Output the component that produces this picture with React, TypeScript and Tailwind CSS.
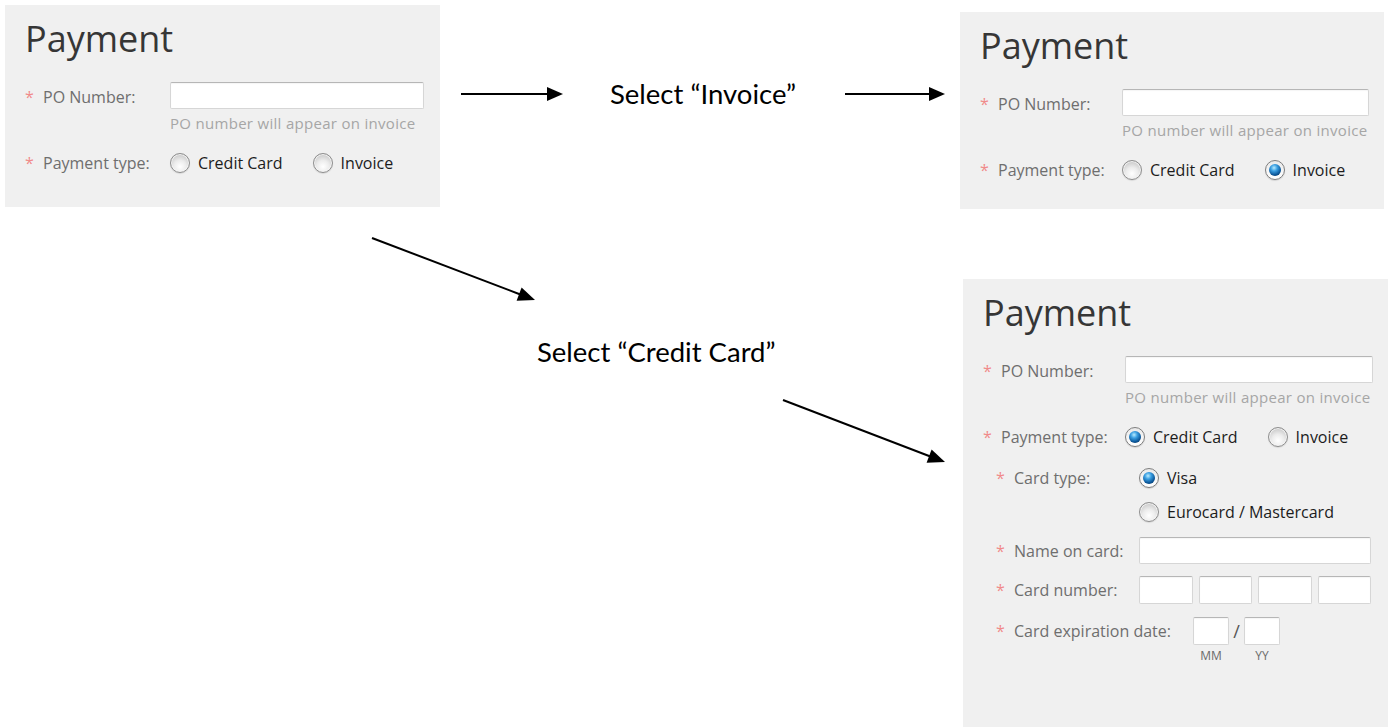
import type { ReactNode } from 'react'

function Star() {
  return <span className="w-[18px] shrink-0 text-[#f08a8a]">*</span>
}

function Label({ children, className = '' }: { children: ReactNode; className?: string }) {
  return (
    <div className={`flex text-[16px] text-[#6e6e6e] ${className}`}>
      <Star />
      <span>{children}</span>
    </div>
  )
}

function Box({ className = '' }: { className?: string }) {
  return (
    <div
      className={`rounded-[2px] border border-[#d6d6d6] border-t-[#b6b6b6] bg-white shadow-[inset_0_1px_1px_rgba(0,0,0,0.04)] ${className}`}
    />
  )
}

function Radio({ checked = false }: { checked?: boolean }) {
  if (checked) {
    return (
      <span className="flex h-[20px] w-[20px] shrink-0 items-center justify-center rounded-full border border-[#7e7e7e] bg-[linear-gradient(#e9e9e9,#ffffff)] shadow-[0_1px_1px_rgba(0,0,0,0.12)]">
        <span className="h-[12px] w-[12px] rounded-full bg-[radial-gradient(circle_at_42%_32%,#b8ecff_0%,#3a9fe2_30%,#0c5799_65%,#04264a_100%)]" />
      </span>
    )
  }
  return (
    <span className="h-[20px] w-[20px] shrink-0 rounded-full border border-[#8e8e8e] bg-[radial-gradient(circle_at_50%_70%,#ffffff_0%,#ececec_40%,#c4c4c4_85%,#d6d6d6_100%)] shadow-[inset_0_0_0_1px_#f4f4f4,0_1px_1px_rgba(0,0,0,0.1)]" />
  )
}

function Option({ checked, children }: { checked?: boolean; children: ReactNode }) {
  return (
    <div className="flex h-[20px] items-center">
      <Radio checked={checked} />
      <span className="ml-[8px] text-[16px] leading-[20px] text-[#1c1c1c]">{children}</span>
    </div>
  )
}

function TopFields({ cols, payment }: { cols: string; payment: 'none' | 'invoice' | 'card' }) {
  return (
    <>
      <h2 className="text-[36px] leading-[36px] text-[#363636]">Payment</h2>
      <div className={`mt-[25px] grid items-start ${cols}`}>
        <Label className="leading-[31px]">PO Number:</Label>
        <div>
          <Box className="h-[27px] w-full" />
          <p className="mt-[4px] text-[15px] leading-[20px] tracking-[0.3px] text-[#a6a6a6]">
            PO number will appear on invoice
          </p>
        </div>
      </div>
      <div className={`mt-[20px] grid items-center ${cols}`}>
        <Label className="leading-[20px]">Payment type:</Label>
        <div className="flex items-center gap-[30px]">
          <Option checked={payment === 'card'}>Credit Card</Option>
          <Option checked={payment === 'invoice'}>Invoice</Option>
        </div>
      </div>
    </>
  )
}

function CardFields() {
  return (
    <div className="ml-[13px] mr-[2px]">
      <div className="mt-[21px] grid grid-cols-[143px_1fr] items-start">
        <Label className="leading-[20px]">Card type:</Label>
        <div className="flex flex-col gap-[14px]">
          <Option checked>Visa</Option>
          <Option>Eurocard / Mastercard</Option>
        </div>
      </div>
      <div className="mt-[15px] grid grid-cols-[143px_1fr] items-start">
        <Label className="leading-[29px]">Name on card:</Label>
        <Box className="h-[27px] w-full" />
      </div>
      <div className="mt-[10px] grid grid-cols-[143px_1fr] items-start">
        <Label className="leading-[29px]">Card number:</Label>
        <div className="flex gap-[6px]">
          <Box className="h-[28px] flex-1" />
          <Box className="h-[28px] flex-1" />
          <Box className="h-[28px] flex-1" />
          <Box className="h-[28px] flex-1" />
        </div>
      </div>
      <div className="mt-[12px] flex items-start">
        <Label className="leading-[29px]">Card expiration date:</Label>
        <div className="ml-[22px]">
          <div className="flex items-center">
            <Box className="h-[28px] w-[36px]" />
            <span className="w-[15px] text-center text-[18px] text-[#555]">/</span>
            <Box className="h-[28px] w-[36px]" />
          </div>
          <div className="mt-[4px] flex text-[12px] leading-[14px] text-[#6a6a6a]">
            <span className="w-[36px] text-center">MM</span>
            <span className="ml-[15px] w-[36px] text-center">YY</span>
          </div>
        </div>
      </div>
    </div>
  )
}

function Arrows() {
  return (
    <svg className="absolute inset-0" width="1388" height="727" viewBox="0 0 1388 727">
      <g fill="#000" stroke="#000" strokeWidth="2">
        <line x1="461" y1="94" x2="549" y2="94" />
        <polygon points="547,87 563,94 547,101" stroke="none" />
        <line x1="845" y1="94" x2="931" y2="94" />
        <polygon points="929,87 945,94 929,101" stroke="none" />
        <line x1="372" y1="238" x2="521" y2="294.7" />
        <polygon points="521.6,287.6 535,300 516.6,300.7" stroke="none" />
        <line x1="783" y1="400" x2="931" y2="456.7" />
        <polygon points="931.6,449.6 945,462 926.6,462.7" stroke="none" />
      </g>
    </svg>
  )
}

export default function App() {
  return (
    <div className="relative h-[727px] w-[1388px] overflow-hidden bg-white font-['Open_Sans',sans-serif]">
      <div className="absolute left-[5px] top-[5px] h-[202px] w-[435px] bg-[#f0f0f0] pl-5 pr-4 pt-4">
        <TopFields cols="grid-cols-[145px_1fr]" payment="none" />
      </div>

      <div className="absolute left-[960px] top-[12px] h-[197px] w-[424px] bg-[#f0f0f0] pl-5 pr-[15px] pt-4">
        <TopFields cols="grid-cols-[142px_1fr]" payment="invoice" />
      </div>

      <div className="absolute left-[963px] top-[279px] h-[448px] w-[425px] bg-[#f0f0f0] pl-5 pr-[15px] pt-4">
        <TopFields cols="grid-cols-[142px_1fr]" payment="card" />
        <CardFields />
      </div>

      <Arrows />

      <p className="absolute left-[610px] top-[80px] font-['Lato',sans-serif] text-[27.5px] leading-none text-black">
        Select “Invoice”
      </p>
      <p className="absolute left-[537px] top-[338px] font-['Lato',sans-serif] text-[27.5px] leading-none text-black">
        Select “Credit Card”
      </p>
    </div>
  )
}
